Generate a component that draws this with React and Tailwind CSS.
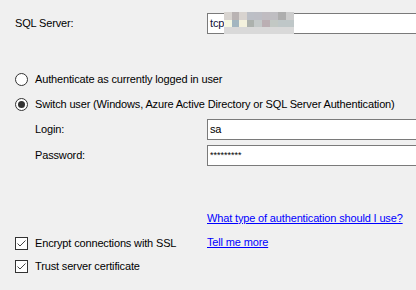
const FONT = { fontFamily: '"Liberation Sans", Arial, sans-serif' };

const blurRows = [
  ["#d8d4d0", "#b9b3b3", "#d8d3cf", "#bcbfc6", "#bdbec5", "#c0bcc1", "#bfbec2", "#aeaeae", "#cdcdcd"],
  ["#f4f7e2", "#a3b6c0", "#f3f1dd", "#acb1ad", "#c4c9c9", "#bbafb3", "#c2c8c4", "#bfc7c8", "#bfc7c8"],
  ["#d9d9d9", "#d9d9d9", "#d9d9d9", "#d9d9d9", "#d9d9d9", "#d9d9d9", "#d9d9d9", "#d9d9d9", "#d9d9d9"],
];

function Radio({ checked }) {
  return (
    <span className="flex h-[13px] w-[13px] shrink-0 items-center justify-center rounded-full border border-[#333333] bg-white">
      {checked && <span className="h-[7px] w-[7px] rounded-full bg-[#333333]" />}
    </span>
  );
}

function Check() {
  return (
    <span className="flex h-[13px] w-[13px] shrink-0 items-center justify-center border border-[#333333] bg-white">
      <svg width="11" height="11" viewBox="0 0 11 11">
        <path d="M1.5 5.5 L4 8 L9.5 2.5" fill="none" stroke="#444" strokeWidth="1" />
      </svg>
    </span>
  );
}

function TextBox({ children }) {
  return (
    <div className="relative flex h-[21px] w-[230px] shrink-0 items-center border border-[#7a7a7a] bg-white pl-[2px] text-black">
      {children}
    </div>
  );
}

export default function App() {
  return (
    <div
      className="h-[290px] w-[416px] overflow-hidden bg-[#f0f0f0] text-[11px] tracking-[-0.15px] text-black"
      style={FONT}
    >
      <div className="flex items-center pt-[13px] pl-[15px]">
        <span className="w-[192px] shrink-0">SQL Server:</span>
        <TextBox>
          <span className="text-[#10103a]">tcp</span>
          <div className="absolute left-[16px] top-[-2px] flex flex-col">
            {blurRows.map((row, i) => (
              <div key={i} className={i === 0 ? "flex h-[8px]" : "flex h-[7px]"}>
                {row.map((c, j) => (
                  <span
                    key={j}
                    className={j === 1 || j === 3 ? "h-full w-[7px]" : "h-full w-[8px]"}
                    style={{ backgroundColor: c }}
                  />
                ))}
              </div>
            ))}
          </div>
        </TextBox>
      </div>

      <div className="mt-[35px] flex h-[20px] items-center gap-[7px] pl-[15px]">
        <Radio />
        <span>Authenticate as currently logged in user</span>
      </div>
      <div className="mt-[5px] flex h-[20px] items-center gap-[7px] pl-[15px]">
        <Radio checked />
        <span className="whitespace-nowrap">Switch user (Windows, Azure Active Directory or SQL Server Authentication)</span>
      </div>

      <div className="mt-[5px] flex items-center pl-[35px]">
        <span className="w-[172px] shrink-0">Login:</span>
        <TextBox>sa</TextBox>
      </div>
      <div className="mt-[5px] flex items-center pl-[35px]">
        <span className="w-[172px] shrink-0">Password:</span>
        <TextBox>
          <span className="text-[9px] tracking-[0px]">*********</span>
        </TextBox>
      </div>

      <div className="mt-[42px] grid grid-cols-[192px_1fr] pl-[15px]">
        <span />
        <a className="flex h-[20px] items-center text-[#0000ff] underline">
          What type of authentication should I use?
        </a>
        <div className="mt-[5px] flex h-[20px] items-center gap-[7px]">
          <Check />
          <span>Encrypt connections with SSL</span>
        </div>
        <a className="mt-[4px] flex h-[20px] items-center text-[#0000ff] underline">Tell me more</a>
        <div className="mt-[3px] flex h-[20px] items-center gap-[7px]">
          <Check />
          <span>Trust server certificate</span>
        </div>
      </div>
    </div>
  );
}
